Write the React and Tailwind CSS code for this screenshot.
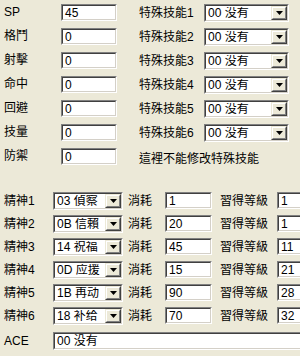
const font = { fontFamily: '"Liberation Sans", "Noto Sans CJK TC", "Noto Sans CJK SC", sans-serif' };

const topRows = [
  { label: 'SP', value: '45', skill: '特殊技能1' },
  { label: '格鬥', value: '0', skill: '特殊技能2' },
  { label: '射擊', value: '0', skill: '特殊技能3' },
  { label: '命中', value: '0', skill: '特殊技能4' },
  { label: '回避', value: '0', skill: '特殊技能5' },
  { label: '技量', value: '0', skill: '特殊技能6' },
  { label: '防禦', value: '0', skill: null },
];

const spirits = [
  { label: '精神1', name: '03 偵察', cost: '1', lv: '1' },
  { label: '精神2', name: '0B 信賴', cost: '20', lv: '1' },
  { label: '精神3', name: '14 祝福', cost: '45', lv: '11' },
  { label: '精神4', name: '0D 应援', cost: '15', lv: '21' },
  { label: '精神5', name: '1B 再动', cost: '90', lv: '28' },
  { label: '精神6', name: '18 补给', cost: '70', lv: '32' },
];

function Sunken({ className, children }) {
  return (
    <div className={'flex shrink-0 border border-t-[#808080] border-l-[#808080] border-b-white border-r-white ' + className}>
      <div className="flex flex-1 min-w-0 items-center border border-t-[#404040] border-l-[#404040] border-b-[#d4d0c8] border-r-[#d4d0c8] bg-white">
        {children}
      </div>
    </div>
  );
}

function Edit({ value, className }) {
  return (
    <Sunken className={className}>
      <span className="pl-[2px] text-[12px] leading-none text-black whitespace-nowrap">{value}</span>
    </Sunken>
  );
}

function Combo({ value, className }) {
  return (
    <Sunken className={className}>
      <span className="flex-1 pl-[2px] text-[12px] leading-none text-black whitespace-nowrap overflow-hidden">{value}</span>
      <div className="flex h-full w-[16px] shrink-0 border border-t-[#ece9d8] border-l-[#ece9d8] border-b-[#404040] border-r-[#404040]">
        <div className="flex flex-1 items-center justify-center border border-t-white border-l-white border-b-[#808080] border-r-[#808080] bg-[#ece9d8]">
          <svg width="7" height="4" viewBox="0 0 7 4"><path d="M0 0h7L3.5 4z" fill="#000" /></svg>
        </div>
      </div>
    </Sunken>
  );
}

export default function App() {
  return (
    <div className="w-[300px] h-[356px] overflow-hidden bg-[#ece9d8] text-black text-[12px]" style={font}>
      <div className="flex flex-col pt-[4px] pl-[4px]">
        {topRows.map((r) => (
          <div key={r.label} className="flex h-[24px] items-start">
            <div className="w-[57px] shrink-0 h-[17px] leading-[17px] whitespace-nowrap">{r.label}</div>
            <Edit value={r.value} className="w-[56px] h-[17px]" />
            {r.skill ? (
              <>
                <div className="ml-[22px] w-[65px] shrink-0 h-[18px] leading-[18px] whitespace-nowrap">{r.skill}</div>
                <Combo value="00 没有" className="w-[85px] h-[18px]" />
              </>
            ) : (
              <div className="ml-[22px] mt-[2px] shrink-0 leading-[18px] whitespace-nowrap">這裡不能修改特殊技能</div>
            )}
          </div>
        ))}
      </div>
      <div className="flex flex-col pt-[20px] pl-[4px]">
        {spirits.map((s) => (
          <div key={s.label} className="flex h-[23px] items-start">
            <div className="w-[49px] shrink-0 h-[18px] leading-[18px] whitespace-nowrap">{s.label}</div>
            <Combo value={s.name} className="w-[70px] h-[18px]" />
            <div className="ml-[5px] w-[37px] shrink-0 h-[18px] leading-[18px] whitespace-nowrap">消耗</div>
            <Edit value={s.cost} className="w-[47px] h-[17px]" />
            <div className="ml-[8px] w-[57px] shrink-0 h-[18px] leading-[18px] whitespace-nowrap">習得等級</div>
            <Edit value={s.lv} className="w-[60px] h-[17px]" />
          </div>
        ))}
        <div className="flex h-[23px] items-start mt-[2px]">
          <div className="w-[49px] shrink-0 h-[18px] leading-[18px] whitespace-nowrap">ACE</div>
          <Edit value="00 没有" className="w-[260px] h-[18px]" />
        </div>
      </div>
    </div>
  );
}
